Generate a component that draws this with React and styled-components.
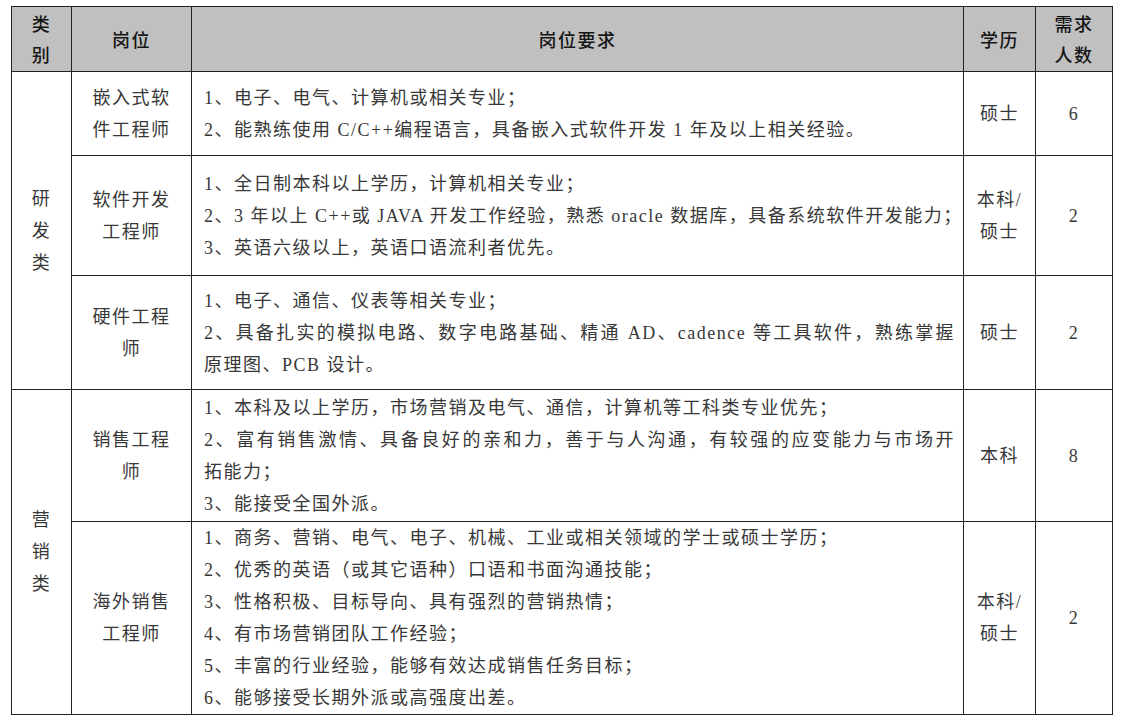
import React from 'react';
import styled, { createGlobalStyle } from 'styled-components';

const GlobalStyle = createGlobalStyle`
  html, body {
    margin: 0;
    padding: 0;
    background: #ffffff;
  }
  body {
    font-family: "Liberation Serif", "Noto Sans CJK SC", serif;
    color: #333333;
  }
`;

const Page = styled.div`
  padding: 6px 13px 0 11px;
  width: 1101px;
`;

const Table = styled.table`
  width: 1101px;
  border-collapse: collapse;
  table-layout: fixed;
  border: 1.5px solid #222222;
`;

const HeadCell = styled.th`
  background: #c0c0c0;
  border: 1.5px solid #222222;
  height: ${props => props.$h || 64}px;
  padding: 0;
  font-family: "Noto Sans CJK SC", sans-serif;
  font-weight: 500;
  font-size: 18px;
  line-height: 31px;
  letter-spacing: 1.5px;
  color: #161616;
  text-align: center;
  vertical-align: middle;
`;

const Cell = styled.td`
  border: 1.5px solid #222222;
  height: ${props => props.$h}px;
  padding: ${props => (props.$left ? '0 8px 0 12px' : '0 4px')};
  font-size: 18px;
  line-height: 32px;
  letter-spacing: 1.5px;
  color: #383838;
  text-align: ${props => (props.$left ? 'left' : 'center')};
  vertical-align: middle;
`;

const Line = styled.div`
  white-space: nowrap;
  text-align: ${props => (props.$justify ? 'justify' : 'inherit')};
  text-align-last: ${props => (props.$justify ? 'justify' : 'auto')};
`;

const cols = [60, 120, 772, 72, 77];

const groups = [
  {
    category: ['研', '发', '类'],
    jobs: [
      {
        title: ['嵌入式软', '件工程师'],
        reqs: [
          ['1、电子、电气、计算机或相关专业；'],
          ['2、能熟练使用 C/C++编程语言，具备嵌入式软件开发 1 年及以上相关经验。'],
        ],
        edu: ['硕士'],
        count: 6,
        h: 83,
      },
      {
        title: ['软件开发', '工程师'],
        reqs: [
          ['1、全日制本科以上学历，计算机相关专业；'],
          ['2、3 年以上 C++或 JAVA 开发工作经验，熟悉 oracle 数据库，具备系统软件开发能力；'],
          ['3、英语六级以上，英语口语流利者优先。'],
        ],
        edu: ['本科/', '硕士'],
        count: 2,
        h: 119,
      },
      {
        title: ['硬件工程', '师'],
        reqs: [
          ['1、电子、通信、仪表等相关专业；'],
          ['2、具备扎实的模拟电路、数字电路基础、精通 AD、cadence 等工具软件，熟练掌握', '原理图、PCB 设计。'],
        ],
        edu: ['硕士'],
        count: 2,
        h: 113,
      },
    ],
  },
  {
    category: ['营', '销', '类'],
    jobs: [
      {
        title: ['销售工程', '师'],
        reqs: [
          ['1、本科及以上学历，市场营销及电气、通信，计算机等工科类专业优先；'],
          ['2、富有销售激情、具备良好的亲和力，善于与人沟通，有较强的应变能力与市场开', '拓能力；'],
          ['3、能接受全国外派。'],
        ],
        edu: ['本科'],
        count: 8,
        h: 131,
      },
      {
        title: ['海外销售', '工程师'],
        reqs: [
          ['1、商务、营销、电气、电子、机械、工业或相关领域的学士或硕士学历；'],
          ['2、优秀的英语（或其它语种）口语和书面沟通技能；'],
          ['3、性格积极、目标导向、具有强烈的营销热情；'],
          ['4、有市场营销团队工作经验；'],
          ['5、丰富的行业经验，能够有效达成销售任务目标；'],
          ['6、能够接受长期外派或高强度出差。'],
        ],
        edu: ['本科/', '硕士'],
        count: 2,
        h: 191,
      },
    ],
  },
];

function Lines({ items }) {
  return items.map((t, i) => <Line key={i}>{t}</Line>);
}

function Requirements({ reqs }) {
  return reqs.map((parts, i) =>
    parts.map((t, j) => (
      <Line key={i + '-' + j} $justify={j < parts.length - 1}>{t}</Line>
    ))
  );
}

export default function App() {
  return (
    <Page>
      <GlobalStyle />
      <Table>
        <colgroup>
          {cols.map((w, i) => <col key={i} style={{ width: w }} />)}
        </colgroup>
        <thead>
          <tr>
            <HeadCell><Lines items={['类', '别']} /></HeadCell>
            <HeadCell>岗位</HeadCell>
            <HeadCell>岗位要求</HeadCell>
            <HeadCell>学历</HeadCell>
            <HeadCell><Lines items={['需求', '人数']} /></HeadCell>
          </tr>
        </thead>
        <tbody>
          {groups.map((g, gi) =>
            g.jobs.map((job, ji) => (
              <tr key={gi + '-' + ji}>
                {ji === 0 && (
                  <Cell rowSpan={g.jobs.length}>
                    <Lines items={g.category} />
                  </Cell>
                )}
                <Cell $h={job.h}><Lines items={job.title} /></Cell>
                <Cell $h={job.h} $left><Requirements reqs={job.reqs} /></Cell>
                <Cell $h={job.h}><Lines items={job.edu} /></Cell>
                <Cell $h={job.h}>{job.count}</Cell>
              </tr>
            ))
          )}
        </tbody>
      </Table>
    </Page>
  );
}
